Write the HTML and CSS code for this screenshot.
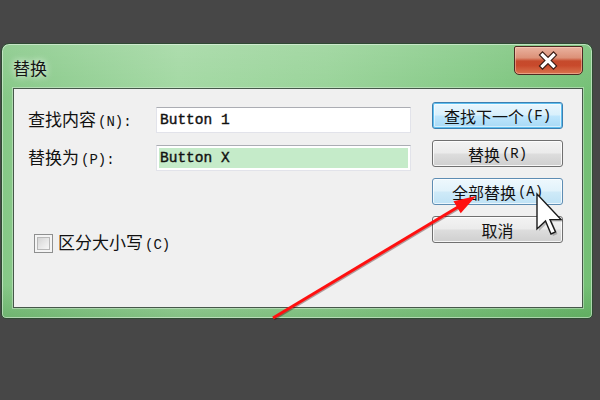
FILE: index.html
```html
<!DOCTYPE html>
<html lang="zh">
<head>
<meta charset="utf-8">
<title>替换</title>
<link rel="stylesheet" href="styles.css">
</head>
<body>
<div class="dialog">
  <div class="titlebar">
    <span class="title">替换</span>
    <div class="close">
      <svg width="69" height="29" viewBox="0 0 69 29">
        <path d="M28.5 9 L39.5 20 M39.5 9 L28.5 20" stroke="#3b1c14" stroke-width="5.5" stroke-linecap="square" fill="none"/>
        <path d="M28.5 9 L39.5 20 M39.5 9 L28.5 20" stroke="#ffffff" stroke-width="3.2" stroke-linecap="square" fill="none"/>
      </svg>
    </div>
  </div>
  <div class="client">
    <div class="form">
      <div class="fields">
        <span class="lbl">查找内容<span class="k">(N):</span></span>
        <div class="field"><span class="val">Button 1</span></div>
        <span class="lbl">替换为<span class="k">(P):</span></span>
        <div class="field sel"><span class="val">Button X</span></div>
      </div>
      <div class="check">
        <span class="box"><span class="inner"></span></span>
        <span class="clbl">区分大小写<span class="k">(C)</span></span>
      </div>
    </div>
    <div class="buttons">
      <div class="btn default">查找下一个<span class="k">(F)</span></div>
      <div class="btn">替换<span class="k">(R)</span></div>
      <div class="btn hover">全部替换<span class="k">(A)</span></div>
      <div class="btn">取消</div>
    </div>
  </div>
</div>
<svg class="overlay" width="600" height="400" viewBox="0 0 600 400">
  <line x1="274" y1="319" x2="459" y2="208" stroke="rgba(60,0,0,0.35)" stroke-width="3"/>
  <line x1="273" y1="318" x2="458" y2="207" stroke="#ff1010" stroke-width="3"/>
  <polygon points="476,196 460.7,213.3 453.5,201.3" fill="#ff1010"/>
  <polygon points="539,196 539,231 547.5,223 553,236 557.5,234 552,221.6 563,221.6" fill="rgba(0,0,0,0.22)"/>
  <polygon points="537,194 537,229 545.5,221 551,234 555.5,232 550,219.6 561,219.6" fill="#ffffff" stroke="#1a1a1a" stroke-width="1.4" stroke-linejoin="miter"/>
</svg>
</body>
</html>
```
FILE: styles.css
```css
html, body {
  margin: 0;
  padding: 0;
}
body {
  width: 600px;
  height: 400px;
  background: #474747;
  position: relative;
  overflow: hidden;
  font-family: "Noto Sans CJK SC", "Noto Sans", sans-serif;
  color: #111;
}
.dialog {
  box-sizing: border-box;
  margin: 43px 0 0 1px;
  width: 592px;
  height: 276px;
  padding: 0 9px 10px 11px;
  border: 1px solid #2f4a33;
  border-radius: 8px 8px 5px 5px;
  background:
    linear-gradient(to bottom, rgba(255,255,255,0.12) 0%, rgba(255,255,255,0) 20%, rgba(0,0,0,0) 88%, rgba(40,120,40,0.25) 100%),
    linear-gradient(to right, #86c887 0%, #a2d8a2 30%, #98d398 55%, #84c985 80%, #73bf74 100%);
  box-shadow: inset 0 0 0 1px rgba(255,255,255,0.45);
  display: flex;
  flex-direction: column;
}
.titlebar {
  height: 44px;
  display: flex;
  justify-content: space-between;
  align-items: flex-start;
  flex: none;
}
.title {
  margin-top: 14px;
  font-size: 17px;
  line-height: 20px;
  color: #151515;
  text-shadow: 0 0 6px rgba(255,255,255,0.8), 0 0 10px rgba(255,255,255,0.5);
}
.close {
  box-sizing: border-box;
  margin-top: 2px;
  width: 69px;
  height: 29px;
  border: 1px solid #4e2a22;
  border-radius: 2px 2px 5px 5px;
  background: linear-gradient(to bottom, #eab3a0 0%, #dc9178 40%, #c64a2c 52%, #c8492b 68%, #d9754f 100%);
  box-shadow: inset 0 0 0 1px rgba(255,220,200,0.45);
}
.close svg { display: block; margin: -1px; }
.client {
  flex: 1;
  background: #f0f0f0;
  border: 1px solid #46584a;
  box-shadow: 0 0 0 1px rgba(255,255,255,0.35);
  display: flex;
  justify-content: space-between;
}
.form {
  padding: 18px 0 0 13px;
  display: flex;
  flex-direction: column;
}
.fields {
  display: grid;
  grid-template-columns: 129px 255px;
  grid-auto-rows: 26px;
  row-gap: 12px;
  align-items: center;
}
.lbl {
  font-size: 17px;
  line-height: 20px;
  padding-left: 1px;
}
.k {
  font-family: "Liberation Mono", "DejaVu Sans Mono", monospace;
  font-size: 14px;
  margin-left: 2px;
}
.field {
  box-sizing: border-box;
  height: 26px;
  background: #fff;
  border: 1px solid #e2e3ea;
  border-top-color: #abadb3;
  display: flex;
  align-items: center;
  padding: 2px;
}
.field .val {
  font-family: "Liberation Mono", "DejaVu Sans Mono", monospace;
  font-size: 14.5px;
  color: #111;
  padding-left: 1px;
  line-height: 20px;
  flex: 1;
  -webkit-text-stroke: 0.4px #111;
}
.field.sel .val {
  background: #c5ebc9;
}
.check {
  margin: 61px 0 0 7px;
  display: flex;
  align-items: center;
  gap: 5px;
}
.box {
  box-sizing: border-box;
  width: 19px;
  height: 19px;
  border: 1px solid #8e8f8f;
  background: #f4f4f4;
  padding: 2px;
}
.box .inner {
  display: block;
  width: 100%;
  height: 100%;
  box-sizing: border-box;
  border: 1px solid #b8b8b8;
  background: linear-gradient(135deg, #d4d4d4 0%, #eaeaea 60%, #f6f6f6 100%);
}
.clbl {
  font-size: 17px;
  line-height: 20px;
}
.buttons {
  padding: 13px 19px 0 0;
  display: flex;
  flex-direction: column;
  gap: 11px;
}
.btn {
  box-sizing: border-box;
  width: 131px;
  height: 27px;
  border: 1px solid #707070;
  border-radius: 3px;
  background: linear-gradient(to bottom, #f3f3f3 0%, #ebebeb 48%, #dddddd 52%, #cfcfcf 100%);
  box-shadow: inset 0 0 0 1px rgba(255,255,255,0.8);
  display: flex;
  align-items: center;
  justify-content: center;
  font-size: 16px;
  line-height: 20px;
  color: #111;
}
.btn.default {
  border-color: #3c7fb1;
  background: linear-gradient(to bottom, #eaf6fd 0%, #d9f0fc 48%, #bee6fd 52%, #a7d9f5 100%);
  box-shadow: inset 0 0 0 1px #5fc0f0, inset 0 0 0 2px rgba(255,255,255,0.5);
}
.btn.hover {
  border-color: #5e8db3;
  background: linear-gradient(to bottom, #eef8fd 0%, #e1f2fb 48%, #cfeaf8 52%, #bfe2f5 100%);
  box-shadow: inset 0 0 0 1px rgba(255,255,255,0.7);
}
.overlay {
  position: absolute;
  top: 0;
  left: 0;
  pointer-events: none;
}
```
